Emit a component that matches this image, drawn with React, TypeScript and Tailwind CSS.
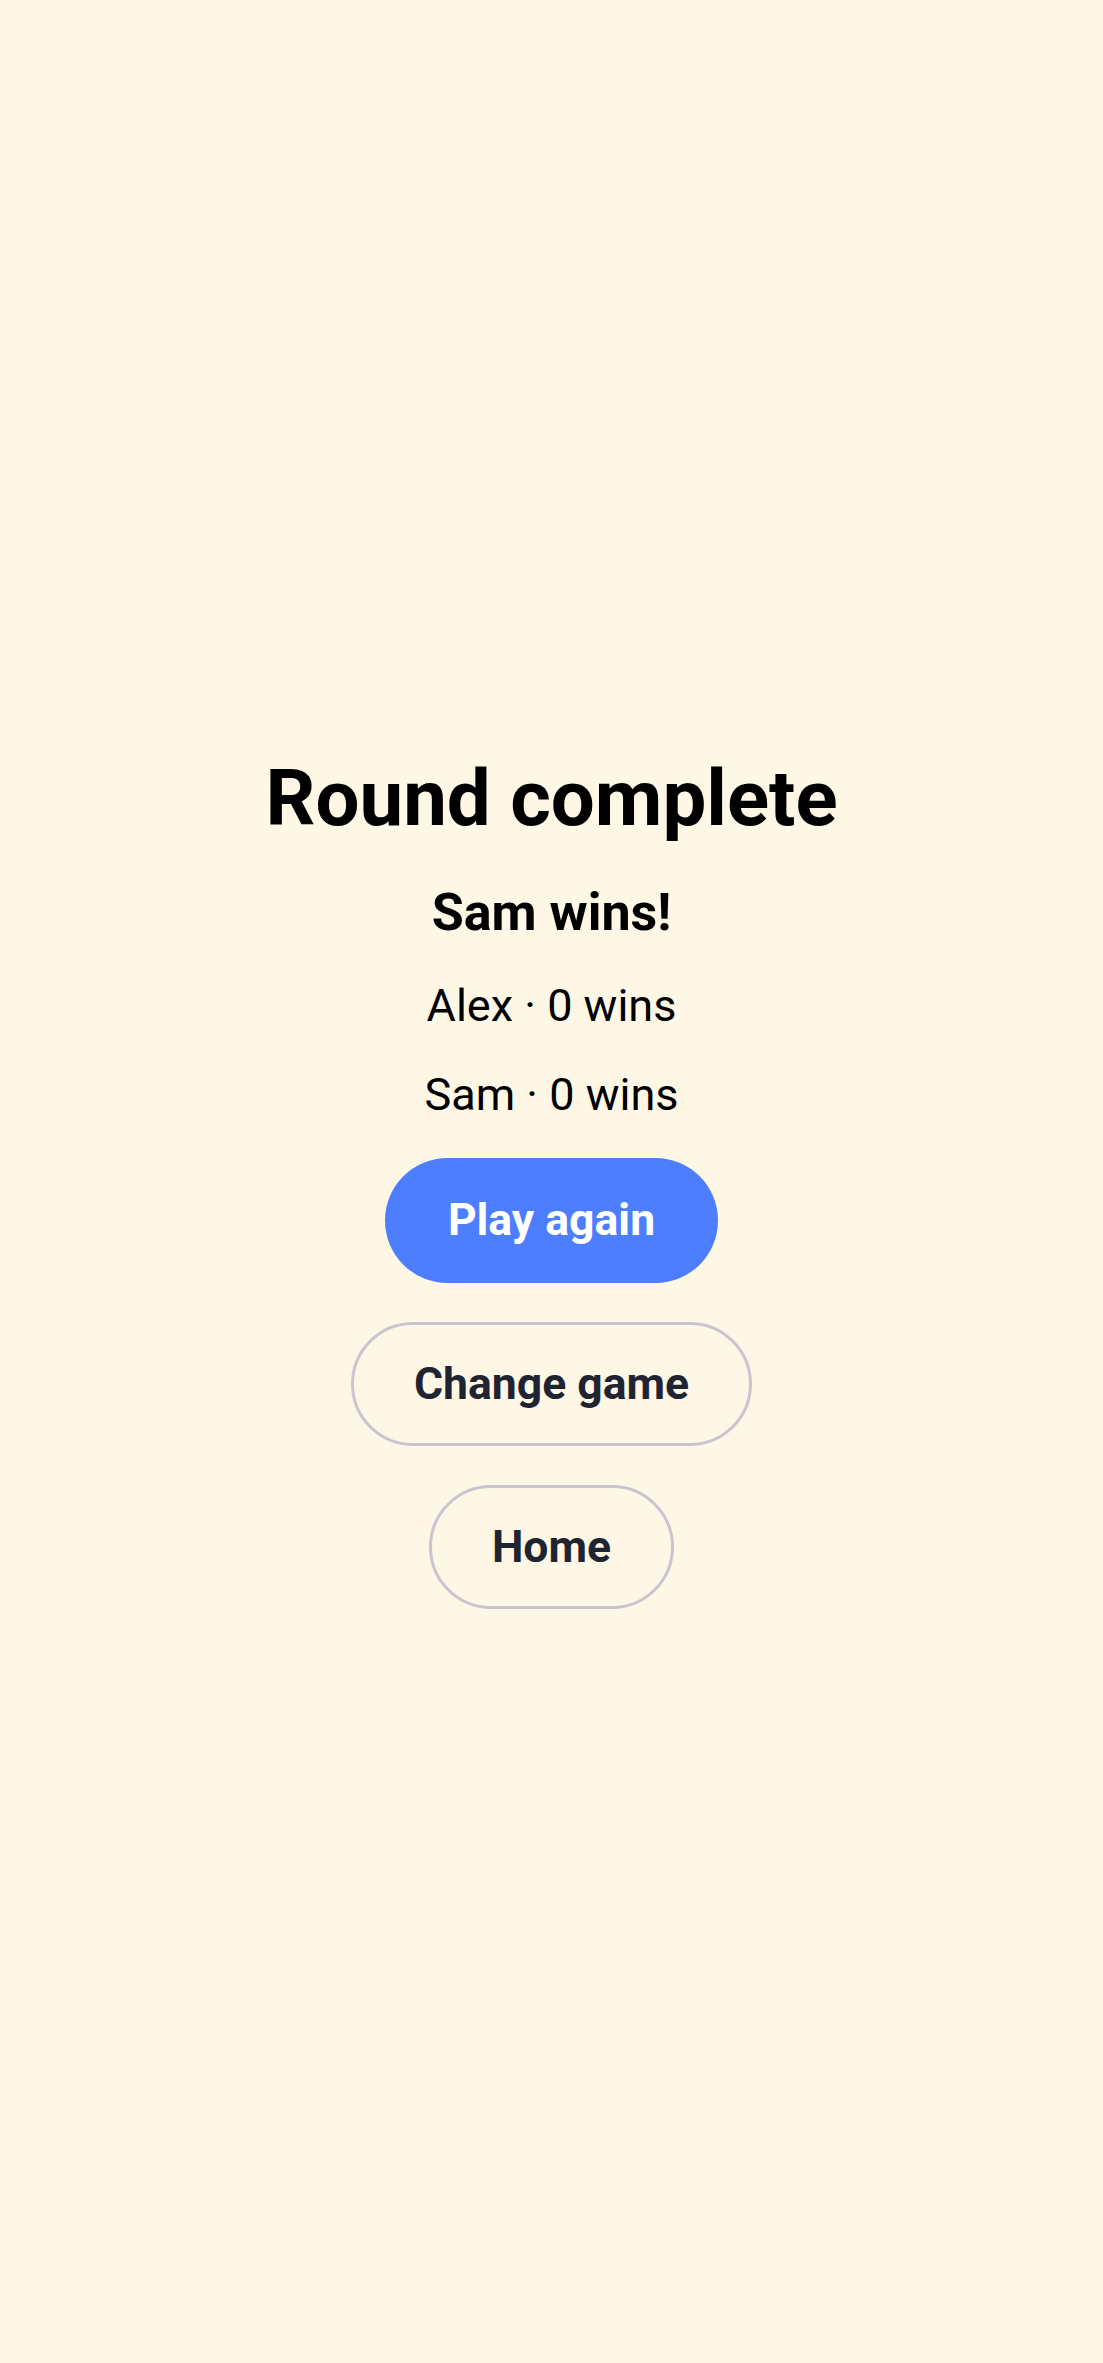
import React from 'react';

// ── Buttons ───────────────────────────────────────────────────────────────────

function PrimaryButton({ children }: { children: React.ReactNode }) {
  return (
    <button className="flex h-[125px] items-center justify-center rounded-full bg-[#4d7eff] px-[63px] text-[44.5px] font-bold leading-none text-white">
      {children}
    </button>
  );
}

function OutlineButton({ children }: { children: React.ReactNode }) {
  return (
    <button className="flex h-[124px] items-center justify-center rounded-full border-[3px] border-[#cbc3cf] px-[60px] text-[44.5px] font-bold leading-none text-[#1f2433]">
      {children}
    </button>
  );
}

// ── Main page ─────────────────────────────────────────────────────────────────

export default function App() {
  const players = [
    { name: 'Alex', wins: 0 },
    { name: 'Sam', wins: 0 },
  ];

  return (
    <div
      className="flex min-h-screen flex-col items-center justify-center bg-[#fff7e6] pt-[6px] text-black"
      style={{ fontFamily: 'Roboto, "Noto Sans", sans-serif' }}
    >
      <h1 className="text-[78px] font-bold leading-none">Round complete</h1>
      <p className="mt-[49px] text-[52px] font-bold leading-none">Sam wins!</p>

      <div className="mt-[44px] flex flex-col items-center gap-[44px]">
        {players.map((p) => (
          <p key={p.name} className="text-[45px] leading-none">
            {p.name} · {p.wins} wins
          </p>
        ))}
      </div>

      <div className="mt-[41px] flex flex-col items-center gap-[39px]">
        <PrimaryButton>Play again</PrimaryButton>
        <OutlineButton>Change game</OutlineButton>
        <OutlineButton>Home</OutlineButton>
      </div>
    </div>
  );
}
